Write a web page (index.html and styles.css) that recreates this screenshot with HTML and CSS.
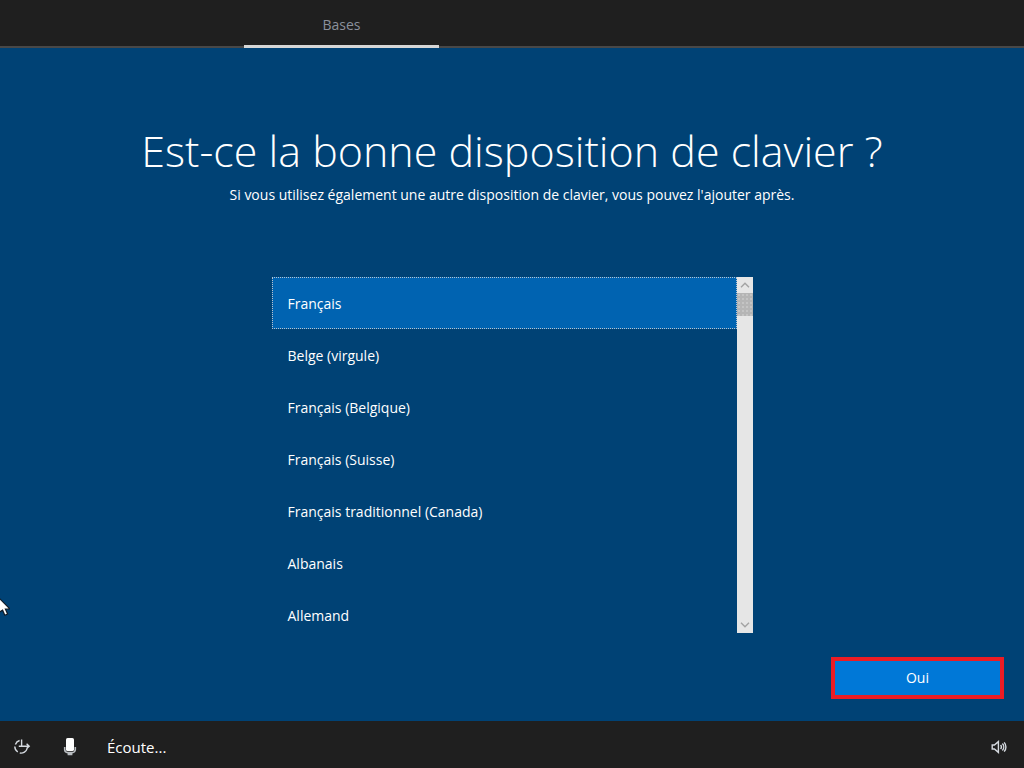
FILE: index.html
```html
<!DOCTYPE html>
<html lang="fr">
<head>
    <meta charset="UTF-8">
    <meta name="viewport" content="width=device-width, initial-scale=1.0">
    <title>Disposition de clavier</title>
    <link rel="stylesheet" href="styles.css">
</head>
<body>
    <header class="topbar">
        <nav class="tabs">
            <a class="tab active" href="#bases">Bases</a>
        </nav>
    </header>

    <main class="page" id="bases">
        <h1 class="title">Est-ce la bonne disposition de clavier ?</h1>
        <p class="subtitle">Si vous utilisez également une autre disposition de clavier, vous pouvez l'ajouter après.</p>

        <form class="setup">
            <div class="picker">
                <div class="layouts" role="radiogroup" aria-label="Disposition de clavier">
                    <label class="layout"><input type="radio" name="layout" checked>Français</label>
                    <label class="layout"><input type="radio" name="layout">Belge (virgule)</label>
                    <label class="layout"><input type="radio" name="layout">Français (Belgique)</label>
                    <label class="layout"><input type="radio" name="layout">Français (Suisse)</label>
                    <label class="layout"><input type="radio" name="layout">Français traditionnel (Canada)</label>
                    <label class="layout"><input type="radio" name="layout">Albanais</label>
                    <label class="layout"><input type="radio" name="layout">Allemand</label>
                </div>
                <div class="scrollbar">
                    <button class="scroll-btn" type="button" aria-label="Haut">
                        <svg width="10" height="6" viewBox="0 0 10 6"><path d="M1 5.2 5 1.2l4 4"/></svg>
                    </button>
                    <div class="thumb"></div>
                    <button class="scroll-btn down" type="button" aria-label="Bas">
                        <svg width="10" height="6" viewBox="0 0 10 6"><path d="M1 .8l4 4 4-4"/></svg>
                    </button>
                </div>
            </div>
            <div class="actions">
                <button class="yes" type="submit">Oui</button>
            </div>
        </form>
    </main>

    <footer class="bottombar">
        <button class="icon-btn" type="button" aria-label="Options d'ergonomie">
            <svg width="18" height="18" viewBox="0 0 18 18" fill="none" stroke="#d5dae0" stroke-width="1.4">
                <path d="M6.6 2.5A6.4 6.4 0 0 0 2.4 6.4M1.8 8.6a6.2 6.2 0 0 0 3 5.4M6.8 15a6.4 6.4 0 0 0 7.4-4.6"/>
                <path d="M8.6 1.6v6.6h7.4M8.6 8.2H5.8M13.6 5.8 16.2 8.2l-2.6 2.4"/>
            </svg>
        </button>
        <button class="icon-btn" type="button" aria-label="Microphone">
            <svg width="16" height="18" viewBox="0 0 16 18">
                <rect x="4" y="0" width="8" height="13" rx="1.6" fill="#fff"/>
                <path d="M2.7 9v2.6a3 3 0 0 0 3 3h4.6a3 3 0 0 0 3-3V9M8 14.6V17M5.6 16.4h4.8" fill="none" stroke="#b9bdc1" stroke-width="1.6"/>
            </svg>
        </button>
        <span class="status">Écoute...</span>
        <button class="icon-btn volume" type="button" aria-label="Volume">
            <svg width="16" height="14" viewBox="0 0 16 14" fill="none" stroke="#d5dae0" stroke-width="1.4">
                <path d="M1.2 5v4h2.2l4 3.4V1.6l-4 3.4z"/>
                <path d="M9.6 5a3 3 0 0 1 0 4M11.4 3.6a5 5 0 0 1 0 6.8M13.2 2.4a7 7 0 0 1 0 9.2"/>
            </svg>
        </button>
    </footer>

    <svg class="cursor" width="10" height="20" viewBox="0 0 10 20">
        <path d="M-4-1 10 13H5.4l2.2 5-2.8 1.2-2.2-5L-4 18z" fill="#fff" stroke="#111a24" stroke-width="1.2"/>
    </svg>
</body>
</html>
```
FILE: styles.css
```css
* {
    box-sizing: border-box;
}
body {
    display: flex;
    flex-direction: column;
    min-height: 100vh;
    margin: 0;
    background-color: #004275;
    color: #fff;
    font-family: "Open Sans", "Noto Sans", sans-serif;
    font-size: 14px;
    line-height: 20px;
}
button {
    border: 0;
    padding: 0;
    color: inherit;
    font: inherit;
    cursor: pointer;
}

.topbar {
    height: 48px;
    background-color: #1f1f1f;
    border-bottom: 2px solid #484848;
}
.tabs {
    display: flex;
    height: 48px;
    padding-left: 244px;
}
.tab {
    width: 195px;
    padding-top: 15px;
    color: #8b909b;
    text-align: center;
    text-decoration: none;
}
.tab.active {
    border-bottom: 3px solid #d6d6d6;
}

.page {
    display: flex;
    flex: 1;
    flex-direction: column;
    padding: 73px 20px 22px;
}
.title {
    margin: 0 0 4px;
    font-size: 43px;
    font-weight: 300;
    line-height: 60px;
    text-align: center;
}
.subtitle {
    margin: 0;
    text-align: center;
}
.setup {
    display: flex;
    flex: 1;
    flex-direction: column;
    margin-top: 72px;
}

.picker {
    display: flex;
    width: 100%;
    max-width: 481px;
    height: 356px;
    margin: 0 auto;
}
.layouts {
    flex: 1;
    overflow: hidden;
}
.layout {
    display: flex;
    align-items: center;
    height: 52px;
    padding: 2px 0 0 15px;
    border: 1px solid transparent;
    cursor: pointer;
}
.layout:has(:checked) {
    background-color: #0063b1;
    border: 1px dotted #b9c4cf;
}
.layout input {
    appearance: none;
    width: 0;
    margin: 0;
}

.scrollbar {
    display: flex;
    flex-direction: column;
    width: 16px;
    background-color: #e6e6e6;
}
.scroll-btn {
    display: flex;
    align-items: center;
    justify-content: center;
    height: 16px;
    background: none;
}
.scroll-btn path {
    fill: none;
    stroke: #a3a3a3;
    stroke-width: 1.4;
}
.scroll-btn.down {
    margin-top: auto;
}
.thumb {
    height: 23px;
    background-color: #b5b5b5;
    background-image: radial-gradient(#c4c4c4 1px, transparent 1px);
    background-size: 4px 4px;
}

.actions {
    display: flex;
    justify-content: flex-end;
    margin-top: auto;
}
.yes {
    width: 173px;
    height: 42px;
    border: 4px solid #ed1c24;
    background-color: #0078d7;
}

.bottombar {
    display: flex;
    align-items: center;
    gap: 31px;
    height: 47px;
    padding: 4px 17px 0 13px;
    background-color: #1f1f1f;
}
.icon-btn {
    display: flex;
    background: none;
}
.status {
    margin-left: -2px;
    font-size: 15px;
}
.volume {
    margin-left: auto;
}

/* mouse pointer, half out of the left edge */
.cursor {
    position: fixed;
    top: 596px;
    left: 0;
}
```
